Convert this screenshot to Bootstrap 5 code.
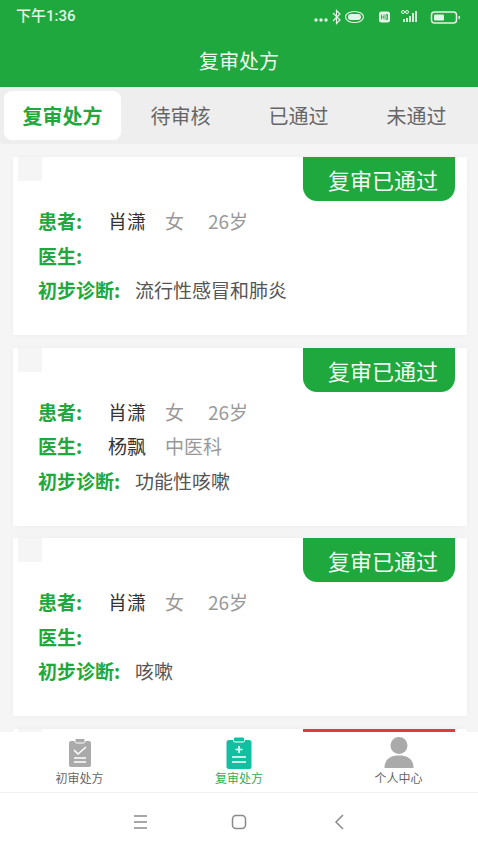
<!DOCTYPE html>
<html lang="zh"><head><meta charset="utf-8">
<link href="https://cdn.jsdelivr.net/npm/bootstrap@5.3.0/dist/css/bootstrap.min.css" rel="stylesheet">
<style>
html,body{width:478px;height:850px;overflow:hidden;margin:0}
body{font-family:"Noto Sans CJK SC","Noto Sans",sans-serif;background:#f5f5f5}
.phone{width:478px;height:850px}
.topbar{background:#1fa83d;color:#fff;height:87px;flex:none}
.sbar{height:33px;padding:0 15px 0 16px;font-family:"Roboto","Noto Sans CJK SC",sans-serif;font-size:15px;font-weight:500;color:#e4f4e7}
.ttl{font-size:20px;height:54px;line-height:56px;text-align:center;color:#eef9f0}
.tabsbar{background:#eeeeef;height:57px;flex:none;padding:4px 0 4px 4px}
.tabitem{font-size:20px;color:#666;width:117px;border-radius:8px;text-align:center;line-height:49px;flex:none}
.tabitem+.tabitem{margin-left:1px}
.tabitem.on{background:#fff;color:#1fa83d;font-weight:700}
.listarea{flex:1 1 0;overflow:hidden;padding:13px 11px 0 13px;min-height:0}
.rcard{background:#fff;height:178px;margin-bottom:12.5px;padding:0 12px 0 5px;box-shadow:0 0 4px rgba(0,0,0,.04);flex:none}
.ph{width:24px;height:24px;background:#f5f5f5}
.tagb{width:152px;height:44px;background:#1fa83d;color:#f1faf3;font-size:22px;line-height:45px;padding-left:25px;border-radius:0 0 14px 14px;white-space:nowrap}
.tagb.red{background:#e63a3a}
.rows{padding:3px 0 0 20px}
.rw{height:34.6px;line-height:34.6px;font-size:19px;white-space:nowrap}
.lb{color:#1fa83d;font-weight:700;display:inline-block}
.lb.s{width:70px}.lb.l{width:97px}
.nm{color:#333;display:inline-block;width:57px}
.gy{color:#999;display:inline-block}
.sx{width:43px}
.dg{color:#555}
.botnav{height:61px;background:#fff;border-bottom:1px solid #f0f0f0;flex:none;position:relative;margin-top:-1px}
.nvi{width:159px;font-size:12px;line-height:16px;color:#666;padding-top:5px}
.nvi.on{color:#2fae4e}
.nvi svg{display:block;margin:0 auto 1px;height:32px;width:40px}
.sysnav{height:57px;background:#fff;flex:none;gap:0}
.sysnav svg{display:block}
</style></head><body>
<div class="phone d-flex flex-column">
 <div class="topbar">
  <div class="sbar d-flex align-items-center justify-content-between">
   <span>下午1:36</span>
   <svg width="149" height="18" viewBox="0 0 149 18" fill="none" stroke="#e4f4e7">
    <g fill="#e4f4e7" stroke="none"><circle cx="2" cy="12" r="1.7"/><circle cx="7" cy="12" r="1.7"/><circle cx="12" cy="12" r="1.7"/></g>
    <path d="M19 5l7 7-3.500 3.500V2.500L26 6l-7 7" stroke-width="1.200"/>
    <ellipse cx="40.500" cy="9" rx="9" ry="5.500" stroke-width="1.200"/><rect x="34" y="6" width="13" height="6" rx="3" fill="#e4f4e7" stroke="none"/>
    <rect x="65" y="3.500" width="11" height="11" rx="2.500" fill="#e4f4e7" stroke="none"/>
    <path d="M67.500 6.500v5M70 6.500v5M67.500 9H70M72 6.500v5h1.500v-5z" stroke="#1fa83d" stroke-width=".9"/>
    <path d="M90 11v3M93 10v4M96 8v6M99 5v9M102 3v11" stroke-width="1.800"/>
    <circle cx="89" cy="4" r="1.500" stroke-width="1"/><circle cx="93" cy="4" r="1.500" stroke-width="1"/>
    <rect x="117.500" y="4" width="25" height="11" rx="3" stroke-width="1.500"/><rect x="120" y="6.500" width="10" height="6" rx="1" fill="#e4f4e7" stroke="none"/><rect x="144.500" y="8" width="1.500" height="3" fill="#e4f4e7" stroke="none"/>
   </svg>
  </div>
  <div class="ttl">复审处方</div>
 </div>
 <div class="tabsbar d-flex">
  <div class="tabitem on">复审处方</div><div class="tabitem">待审核</div><div class="tabitem">已通过</div><div class="tabitem">未通过</div>
 </div>
 <div class="listarea d-flex flex-column">
  <div class="rcard">
   <div class="d-flex justify-content-between align-items-start"><div class="ph"></div><div class="tagb">复审已通过</div></div>
   <div class="rows">
    <div class="rw"><span class="lb s">患者:</span><span class="nm">肖潇</span><span class="gy sx">女</span><span class="gy">26岁</span></div>
    <div class="rw"><span class="lb s">医生:</span></div>
    <div class="rw"><span class="lb l">初步诊断:</span><span class="dg">流行性感冒和肺炎</span></div>
   </div>
  </div>
  <div class="rcard">
   <div class="d-flex justify-content-between align-items-start"><div class="ph"></div><div class="tagb">复审已通过</div></div>
   <div class="rows">
    <div class="rw"><span class="lb s">患者:</span><span class="nm">肖潇</span><span class="gy sx">女</span><span class="gy">26岁</span></div>
    <div class="rw"><span class="lb s">医生:</span><span class="nm">杨飘</span><span class="gy">中医科</span></div>
    <div class="rw"><span class="lb l">初步诊断:</span><span class="dg">功能性咳嗽</span></div>
   </div>
  </div>
  <div class="rcard">
   <div class="d-flex justify-content-between align-items-start"><div class="ph"></div><div class="tagb">复审已通过</div></div>
   <div class="rows">
    <div class="rw"><span class="lb s">患者:</span><span class="nm">肖潇</span><span class="gy sx">女</span><span class="gy">26岁</span></div>
    <div class="rw"><span class="lb s">医生:</span></div>
    <div class="rw"><span class="lb l">初步诊断:</span><span class="dg">咳嗽</span></div>
   </div>
  </div>
  <div class="rcard">
   <div class="d-flex justify-content-between align-items-start"><div class="ph"></div><div class="tagb red"></div></div>
  </div>
 </div>
 <div class="botnav d-flex justify-content-between">
  <div class="nvi text-center">
   <svg viewBox="0 0 40 32"><rect x="9" y="4" width="22" height="26" rx="2" fill="#aaa"/><rect x="15" y="1.500" width="10" height="4.500" rx="1.500" fill="#aaa" stroke="#fff"/><path d="M14 13l4 4 8-7" fill="none" stroke="#fff" stroke-width="1.500"/><path d="M14 21h12M14 25h12" stroke="#fff" stroke-width="1.500"/></svg>
   初审处方
  </div>
  <div class="nvi on text-center">
   <svg viewBox="0 0 40 32"><rect x="7.500" y="3" width="25" height="29" rx="2.500" fill="#12bfa0"/><rect x="14.500" y="0" width="11" height="5" rx="1.500" fill="#12bfa0" stroke="#fff"/><path d="M20 9v7M16.500 12.500h7M13 20h14M13 25h14" stroke="#fff" stroke-width="1.500" fill="none"/></svg>
   复审处方
  </div>
  <div class="nvi text-center">
   <svg viewBox="0 0 40 32"><circle cx="20" cy="8.500" r="8.500" fill="#aaa"/><path d="M5.500 31c0-9 6-12.500 14.500-12.500S34.500 22 34.500 31z" fill="#aaa"/></svg>
   个人中心
  </div>
 </div>
 <div class="sysnav d-flex align-items-center justify-content-center">
  <svg width="478" height="30" viewBox="0 0 478 30" fill="none" stroke="#8a8a8a" stroke-width="1.500"><path d="M134 9h13M134 15h13M134 21h13"/><rect x="232.500" y="8.500" width="13" height="13" rx="3.500"/><path d="M343 8l-7 7 7 7"/></svg>
 </div>
</div>
<script src="https://cdn.jsdelivr.net/npm/bootstrap@5.3.0/dist/js/bootstrap.bundle.min.js"></script>
</body></html>
